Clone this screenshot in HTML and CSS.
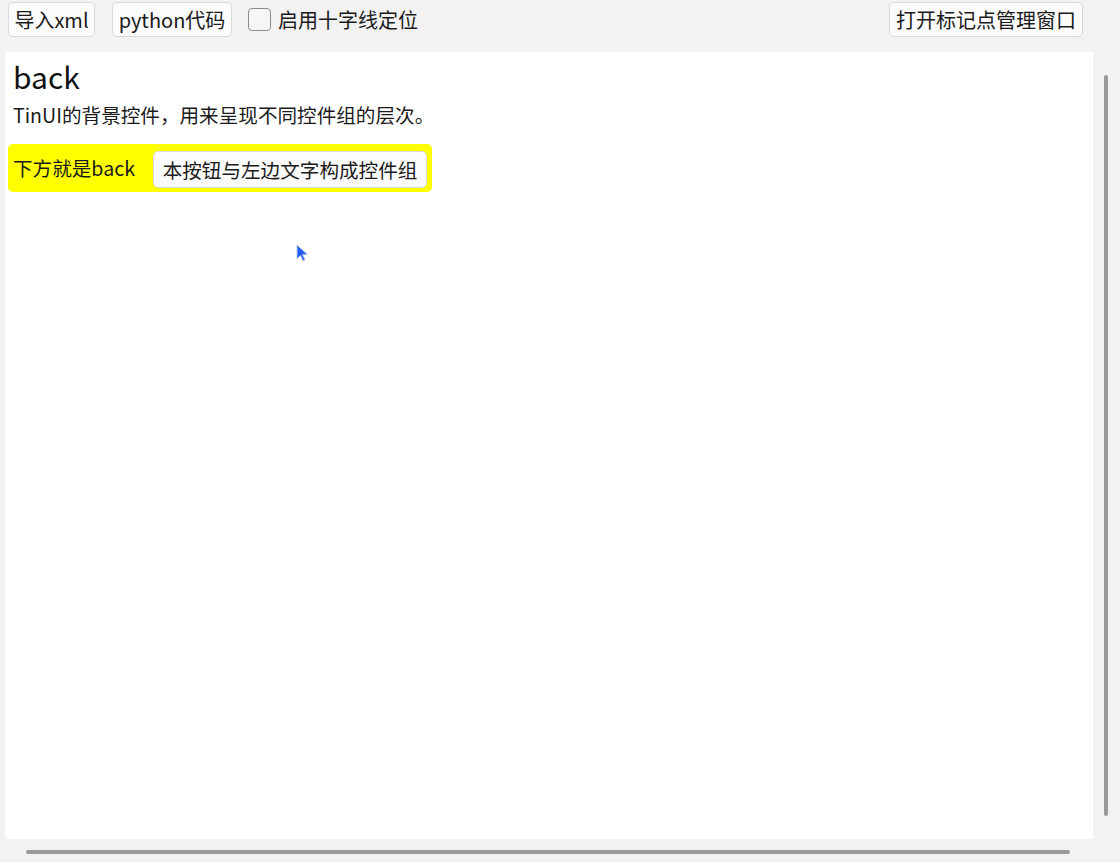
FILE: index.html
```html
<!DOCTYPE html>
<html>
<head>
<meta charset="utf-8">
<link rel="stylesheet" href="styles.css">
</head>
<body>
<div class="app">
  <div class="toolbar">
    <button class="btn b1">导入xml</button>
    <button class="btn b2">python代码</button>
    <label class="check"><span class="box"></span><span>启用十字线定位</span></label>
    <div class="spacer"></div>
    <button class="btn b3">打开标记点管理窗口</button>
  </div>
  <div class="main">
    <div class="canvas">
      <div class="title">back</div>
      <div class="desc">TinUI的背景控件，用来呈现不同控件组的层次。</div>
      <div class="back">
        <span class="label">下方就是back</span>
        <button class="btn inner">本按钮与左边文字构成控件组</button>
      </div>
      <svg class="cursor" width="14" height="20" viewBox="0 0 14 20"><path d="M1 1 L1 15 L4.5 11.5 L7 17 L9 16 L6.6 10.6 L11.5 10.6 Z" fill="#1f5df2" stroke="#b9c6e6" stroke-width="1"/></svg>
    </div>
    <div class="vtrack"><div class="vbar"></div></div>
  </div>
  <div class="htrack"><div class="hbar"></div></div>
</div>
</body>
</html>
```
FILE: styles.css
```css
html, body {
  margin: 0;
  padding: 0;
  background: #f2f2f2;
}
body {
  width: 1120px;
  height: 862px;
  overflow: hidden;
  font-family: "Noto Sans CJK SC", "Noto Sans", sans-serif;
  color: #1a1a1a;
}
.app {
  display: flex;
  flex-direction: column;
  height: 862px;
}
.toolbar {
  display: flex;
  align-items: center;
  height: 39px;
  padding: 0 37px 0 8px;
  box-sizing: border-box;
}
.btn {
  font-family: "Noto Sans CJK SC", "Noto Sans", sans-serif;
  font-size: 20px;
  line-height: 1;
  color: #1a1a1a;
  background: #fbfbfb;
  border: 1px solid #d9d9d9;
  border-radius: 5px;
  height: 35px;
  padding: 0 4px;
  display: inline-flex;
  align-items: center;
  justify-content: center;
  box-sizing: border-box;
  white-space: nowrap;
}
.b1 { width: 87px; }
.b2 { width: 120px; margin-left: 17px; }
.b3 { width: 194px; }
.check {
  display: flex;
  align-items: center;
  margin-left: 16px;
  font-size: 20px;
  gap: 7px;
}
.box {
  width: 21px;
  height: 21px;
  border: 1px solid #8c8c8c;
  border-radius: 4px;
  background: #f6f6f6;
}
.spacer { flex: 1; }
.main {
  display: flex;
  margin-top: 13px;
  height: 787px;
}
.canvas {
  position: relative;
  margin-left: 5px;
  width: 1088px;
  height: 787px;
  background: #ffffff;
  padding: 4px 0 0 8px;
  box-sizing: border-box;
}
.title {
  font-size: 30px;
  line-height: 40px;
  color: #111;
}
.desc {
  font-size: 19.6px;
  line-height: 28px;
  margin-top: 5px;
  white-space: nowrap;
}
.back {
  display: flex;
  align-items: flex-start;
  margin-left: -5px;
  margin-top: 15px;
  width: 424px;
  height: 48px;
  background: #ffff00;
  border-radius: 5px;
  box-sizing: border-box;
  padding: 7px 5px 0 5px;
}
.label {
  font-size: 19.6px;
  line-height: 37px;
  margin-top: -2px;
  white-space: nowrap;
}
.inner {
  margin-left: auto;
  width: 274px;
  height: 37px;
  font-size: 19.6px;
}
.cursor {
  position: absolute;
  left: 291px;
  top: 192px;
}
.vtrack {
  flex: 1;
  position: relative;
}
.vbar {
  position: absolute;
  left: 11px;
  top: 23px;
  width: 4px;
  height: 741px;
  border-radius: 2px;
  background: #9a9a9a;
}
.htrack {
  position: relative;
  height: 23px;
}
.hbar {
  position: absolute;
  left: 26px;
  top: 11px;
  width: 1044px;
  height: 4px;
  border-radius: 2px;
  background: #9a9a9a;
}
```
